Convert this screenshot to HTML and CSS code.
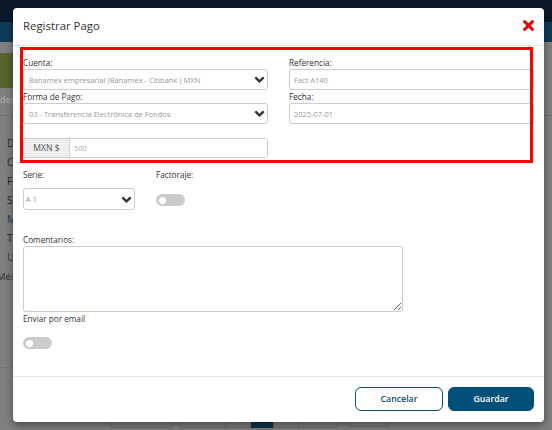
FILE: index.html
```html
<!DOCTYPE html>
<html lang="es">
<head>
<meta charset="utf-8">
<title>Registrar Pago</title>
<link rel="stylesheet" href="styles.css">
</head>
<body>
<div class="page">
  <div class="topbar"></div>
  <div class="subnav"></div>
  <div class="banner"></div>
  <div class="crumb">des</div>
  <ul class="details">
    <li>Dirección</li>
    <li>Colonia</li>
    <li>Folio</li>
    <li>Serie</li>
    <li class="link">Moneda</li>
    <li>Teléfono</li>
    <li class="link">Uso CFDI</li>
  </ul>
  <div class="city">México</div>
  <div class="rule"></div>
  <div class="pager">
    <span class="pg w62"></span>
    <span class="pg w45"></span>
    <span class="pg w26"></span>
    <span class="pg active"></span>
    <span class="pg w25"></span>
    <span class="pg w40"></span>
    <span class="pg w39 sep"></span>
  </div>
</div>

<div class="modal">
  <div class="modal-header">
    <h4 class="modal-title">Registrar Pago</h4>
    <button class="close" type="button" aria-label="Cerrar">
      <svg width="11" height="11" viewBox="0 0 11 11"><path d="M1.6 1.6 L9.4 9.4 M9.4 1.6 L1.6 9.4" stroke="#e8000b" stroke-width="2.9" stroke-linecap="round"/></svg>
    </button>
  </div>
  <div class="modal-body">
    <div class="grid2">
      <div class="field">
        <label class="lbl">Cuenta:</label>
        <div class="select-wrap">
          <select class="ctl"><option>Banamex empresarial (Banamex - Citibank ) MXN</option></select>
          <svg class="chev" width="11" height="7" viewBox="0 0 11 7"><path d="M1.3 1.3 L5.5 5.3 L9.7 1.3" fill="none" stroke="#333" stroke-width="2.3"/></svg>
        </div>
      </div>
      <div class="field">
        <label class="lbl">Referencia:</label>
        <input class="ctl inp" type="text" value="Fact A140">
      </div>
      <div class="field">
        <label class="lbl">Forma de Pago:</label>
        <div class="select-wrap">
          <select class="ctl"><option>03 - Transferencia Electrónica de Fondos</option></select>
          <svg class="chev" width="11" height="7" viewBox="0 0 11 7"><path d="M1.3 1.3 L5.5 5.3 L9.7 1.3" fill="none" stroke="#333" stroke-width="2.3"/></svg>
        </div>
      </div>
      <div class="field">
        <label class="lbl">Fecha:</label>
        <input class="ctl inp" type="text" value="2025-07-01">
      </div>
      <div class="input-group">
        <span class="addon">MXN $</span>
        <input class="amount" type="text" value="500">
      </div>
    </div>

    <div class="grid4">
      <div class="field">
        <label class="lbl lbl-sp">Serie:</label>
        <div class="select-wrap">
          <select class="ctl tall small"><option>A 1</option></select>
          <svg class="chev" width="11" height="7" viewBox="0 0 11 7"><path d="M1.3 1.3 L5.5 5.3 L9.7 1.3" fill="none" stroke="#333" stroke-width="2.3"/></svg>
        </div>
      </div>
      <div class="field">
        <label class="lbl lbl-sp">Factoraje:</label>
        <span class="toggle toggle-mid"><span class="knob"></span></span>
      </div>
    </div>

    <div class="field comments">
      <label class="lbl">Comentarios:</label>
      <textarea class="textarea"></textarea>
    </div>
    <div class="field">
      <label class="lbl">Enviar por email</label>
      <span class="toggle toggle-email"><span class="knob"></span></span>
    </div>
  </div>
  <div class="modal-footer">
    <button class="btn btn-outline" type="button">Cancelar</button>
    <button class="btn btn-primary" type="button">Guardar</button>
  </div>
  <div class="highlight"></div>
</div>
</body>
</html>
```

FILE: styles.css
```css
* { box-sizing: border-box; }
html, body { margin: 0; padding: 0; }
body {
  width: 552px;
  height: 430px;
  overflow: hidden;
  background: #808080;
  font-family: "Open Sans", "Liberation Sans", sans-serif;
  position: relative;
}

/* background page (dimmed) */
.page {
  height: 430px;
  display: flex;
  flex-direction: column;
}
.topbar { height: 22px; background: #0b1a29; }
.subnav { height: 20px; background: #0f3a56; }
.banner { height: 35px; width: 300px; margin-top: 11px; background: #56652e; }
.crumb {
  height: 28px;
  padding-top: 5px;
  font-size: 9px;
  line-height: 14px;
  color: #b4b4b4;
  border-bottom: 1px solid #747474;
}
.details {
  list-style: none;
  margin: 18px 0 0;
  padding: 0 0 0 7px;
}
.details li {
  font-size: 10px;
  line-height: 19px;
  height: 19px;
  color: #1b2531;
}
.details li.link { color: #1c3c5c; }
.city {
  font-size: 9.5px;
  line-height: 19px;
  color: #2e2e2e;
  margin-left: -3px;
}
.rule { margin-top: 81px; height: 1px; background: #767676; width: 300px; }
.pager {
  margin-top: auto;
  display: flex;
  padding-left: 110px;
  height: 24px;
  margin-bottom: 2px;
}
.pg { height: 24px; border: 1px solid #6c6c6c; border-right: none; }
.pg.w62 { width: 62px; border-right: 1px solid #6c6c6c; margin-right: 8px; }
.pg.w45 { width: 45px; }
.pg.w26 { width: 26px; }
.pg.active { width: 22px; background: #0b3550; border-color: #0b3550; }
.pg.w25 { width: 25px; }
.pg.w40 { width: 40px; border-right: 1px solid #6c6c6c; }
.pg.w39 { width: 39px; margin-left: 11px; border-right: 1px solid #6c6c6c; height: 23px; }

/* modal */
.modal {
  position: absolute;
  left: 13px;
  top: 8px;
  width: 531px;
  height: 414px;
  background: #fff;
  border-radius: 4px;
  box-shadow: 0 3px 9px rgba(0, 0, 0, 0.45);
  display: flex;
  flex-direction: column;
}
.modal-header {
  height: 38px;
  flex: none;
  padding: 0 10px 0 10px;
  display: flex;
  align-items: center;
  justify-content: space-between;
  border-bottom: 1px solid #e5e5e5;
}
.modal-title {
  margin: 0;
  font-size: 11.4px;
  font-weight: 400;
  color: #333;
  padding-bottom: 2px;
}
.close {
  border: none;
  background: none;
  padding: 0;
  width: 11px;
  height: 11px;
  display: flex;
  margin-bottom: 2px;
}
.modal-body {
  flex: 1;
  padding: 10px 10px 0 10px;
}
.grid2 {
  display: grid;
  grid-template-columns: 245px 245px;
  column-gap: 21px;
}
.grid4 {
  display: grid;
  grid-template-columns: repeat(4, 112px);
  column-gap: 21px;
  margin-top: 10px;
}
.field { display: flex; flex-direction: column; align-items: flex-start; }
.lbl {
  display: block;
  font-size: 8.2px;
  line-height: 13px;
  height: 13px;
  color: #333;
}
.lbl-sp { margin-bottom: 7px; }
.select-wrap { position: relative; width: 100%; height: auto; }
.ctl {
  display: block;
  width: 100%;
  height: 21px;
  border: 1px solid #ccc;
  border-radius: 3px;
  background: #fff;
  font-family: "Open Sans", "Liberation Sans", sans-serif;
  font-size: 7.5px;
  color: #999;
  padding: 0 20px 0 5px;
  margin: 0;
  appearance: none;
  -webkit-appearance: none;
  outline: none;
}
.ctl.inp { padding: 0 4px; }
.ctl.tall { height: 22px; }
.ctl.small { padding-left: 2px; }
.chev {
  position: absolute;
  right: 3px;
  top: 50%;
  margin-top: -3.5px;
  pointer-events: none;
}
.input-group {
  display: flex;
  height: 20px;
  margin-top: 14px;
  border: 1px solid #ccc;
  border-radius: 3px;
  overflow: hidden;
}
.addon {
  width: 46px;
  background: #eee;
  border-right: 1px solid #ccc;
  font-size: 8.6px;
  color: #555;
  display: flex;
  align-items: center;
  justify-content: center;
}
.amount {
  flex: 1;
  border: none;
  outline: none;
  padding: 0 4px;
  font-family: "Open Sans", "Liberation Sans", sans-serif;
  font-size: 7.5px;
  color: #aaa;
  min-width: 0;
}
.toggle {
  width: 29px;
  height: 12px;
  border-radius: 6px;
  background: #ccc;
  display: flex;
  align-items: center;
  padding-left: 3px;
}
.toggle .knob {
  width: 7px;
  height: 7px;
  border-radius: 50%;
  background: #fff;
}
.toggle-mid { margin-top: 6px; }
.toggle-email { margin-top: 12.5px; }
.comments { margin-top: 22.5px; }
.textarea {
  width: 380px;
  height: 66px;
  border: 1px solid #ccc;
  border-radius: 3px;
  margin: 0;
  display: block;
}
.modal-footer {
  height: 46px;
  flex: none;
  border-top: 1px solid #e5e5e5;
  display: flex;
  justify-content: flex-end;
  align-items: flex-start;
  gap: 5px;
  padding: 10px 10px 0 0;
}
.btn {
  height: 24px;
  border-radius: 6px;
  font-family: "Open Sans", "Liberation Sans", sans-serif;
  font-weight: 600;
  font-size: 8.8px;
  padding: 0;
  display: flex;
  align-items: center;
  justify-content: center;
}
.btn-outline {
  width: 88px;
  background: #fff;
  border: 1px solid #0d4f73;
  color: #0d4f73;
}
.btn-primary {
  width: 86px;
  background: #01507a;
  border: 1px solid #01507a;
  color: #fff;
}
.highlight {
  position: absolute;
  left: 7px;
  top: 39px;
  width: 513px;
  height: 116px;
  border: 3px solid #ff0000;
  pointer-events: none;
}
```
